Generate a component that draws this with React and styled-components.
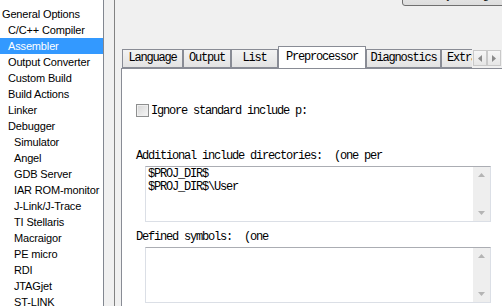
import React from 'react';
import styled, { createGlobalStyle } from 'styled-components';

const GlobalStyle = createGlobalStyle`
  html, body {
    margin: 0;
    padding: 0;
    background: #f0f0f0;
  }
`;

const Page = styled.div`
  display: flex;
  width: 502px;
  height: 306px;
  overflow: hidden;
  background: #f0f0f0;
`;

const TreePanel = styled.div`
  box-sizing: border-box;
  width: 104px;
  flex: none;
  background: #fff;
  border-right: 1px solid #828790;
  padding-top: 6px;
  font-family: "Liberation Sans", Arial, sans-serif;
  font-size: 11px;
  letter-spacing: -0.15px;
`;

const TreeRow = styled.div`
  height: 16px;
  line-height: 16px;
  padding-left: ${(p) => 2 + p.$level * 6}px;
  white-space: nowrap;
  color: ${(p) => (p.$selected ? '#fff' : '#000')};
  background: ${(p) => (p.$selected ? '#3399ff' : 'transparent')};
`;

const Splitter = styled.div`
  box-sizing: border-box;
  width: 11px;
  flex: none;
  border-right: 1px solid #828282;
`;

const Main = styled.div`
  flex: 1;
  min-width: 0;
  display: flex;
  flex-direction: column;
  padding-left: 6px;
`;

const TopBar = styled.div`
  height: 46px;
  display: flex;
  justify-content: flex-end;
  align-items: flex-start;
`;

const FactoryButton = styled.div`
  box-sizing: border-box;
  width: 106px;
  height: 22px;
  margin-top: -16px;
  margin-right: -6px;
  border: 1px solid #707070;
  border-radius: 3px;
  background: linear-gradient(#f2f2f2, #dddddd);
  font-family: "Liberation Sans", Arial, sans-serif;
  font-size: 11px;
  line-height: 20px;
  text-align: center;
  color: #000;
`;

const TabRow = styled.div`
  display: flex;
  align-items: flex-end;
  height: 22px;
  padding-left: 1px;
  position: relative;
  z-index: 1;
`;

const TabList = styled.div`
  display: flex;
  align-items: flex-end;
  flex: 1;
  min-width: 0;
  height: 100%;
  overflow: hidden;
`;

const Tab = styled.div`
  box-sizing: border-box;
  flex: none;
  width: ${(p) => p.$width}px;
  height: ${(p) => (p.$active ? 23 : 19)}px;
  margin-bottom: ${(p) => (p.$active ? -1 : 0)}px;
  border: 1px solid #898c95;
  border-bottom: ${(p) => (p.$active ? 'none' : '1px solid #898c95')};
  background: ${(p) => (p.$active ? '#fff' : 'linear-gradient(#f3f3f3, #e3e3e3)')};
  font-family: "Liberation Mono", "Courier New", monospace;
  font-size: 12px;
  letter-spacing: -1.2px;
  line-height: ${(p) => (p.$active ? 20 : 17)}px;
  text-align: ${(p) => (p.$clip ? 'left' : 'center')};
  padding-left: ${(p) => (p.$clip ? 5 : 0)}px;
  white-space: nowrap;
  color: #000;
`;

const ArrowGroup = styled.div`
  display: flex;
  margin: 0 1px 2px 1px;
`;

const ArrowButton = styled.div`
  box-sizing: border-box;
  width: 14px;
  height: 16px;
  border: 1px solid #c9c9c9;
  background: linear-gradient(#f6f6f6, #e6e6e6);
  display: flex;
  align-items: center;
  justify-content: center;
`;

const Panel = styled.div`
  flex: 1;
  background: #fff;
  border-top: 1px solid #898c95;
  border-left: 1px solid #898c95;
  padding: 35px 0 0 14px;
  font-family: "Liberation Mono", "Courier New", monospace;
  font-size: 12px;
  letter-spacing: -1.2px;
  color: #000;
`;

const CheckRow = styled.div`
  display: flex;
  align-items: center;
  gap: 2px;
  height: 13px;
  white-space: nowrap;
`;

const CheckBox = styled.span`
  box-sizing: border-box;
  width: 13px;
  height: 13px;
  flex: none;
  border: 1px solid #8e8f8f;
  background: linear-gradient(135deg, #d6d6d6, #f7f7f7);
  box-shadow: inset 0 0 0 1px #f0f0f0;
`;

const FieldLabel = styled.div`
  margin-top: ${(p) => p.$gap}px;
  height: 12px;
  line-height: 12px;
  white-space: pre;
`;

const TextBox = styled.div`
  box-sizing: border-box;
  display: flex;
  width: 346px;
  height: 56px;
  margin: 4px 0 0 9px;
  border: 1px solid #dbdfe6;
  border-top-color: #abadb3;
  background: #fff;
`;

const TextContent = styled.div`
  flex: 1;
  padding: 1px 2px;
  line-height: 13px;
  white-space: pre;
`;

const ScrollBar = styled.div`
  width: 17px;
  flex: none;
  background: #eeeeee;
  display: flex;
  flex-direction: column;
  justify-content: space-between;
  align-items: center;
  padding: 6px 0;
  box-sizing: border-box;
`;

const Triangle = ({ dir, color = '#b4b4b4' }) => {
  const pts = {
    up: '0,4 3.5,0 7,4',
    down: '0,0 3.5,4 7,0',
    left: '4,0 0,3.5 4,7',
    right: '0,0 4,3.5 0,7',
  }[dir];
  const horiz = dir === 'left' || dir === 'right';
  return (
    <svg width={horiz ? 4 : 7} height={horiz ? 7 : 4} viewBox={horiz ? '0 0 4 7' : '0 0 7 4'}>
      <polygon points={pts} fill={color} />
    </svg>
  );
};

const treeItems = [
  { label: 'General Options', level: 0 },
  { label: 'C/C++ Compiler', level: 1 },
  { label: 'Assembler', level: 1, selected: true },
  { label: 'Output Converter', level: 1 },
  { label: 'Custom Build', level: 1 },
  { label: 'Build Actions', level: 1 },
  { label: 'Linker', level: 1 },
  { label: 'Debugger', level: 1 },
  { label: 'Simulator', level: 2 },
  { label: 'Angel', level: 2 },
  { label: 'GDB Server', level: 2 },
  { label: 'IAR ROM-monitor', level: 2 },
  { label: 'J-Link/J-Trace', level: 2 },
  { label: 'TI Stellaris', level: 2 },
  { label: 'Macraigor', level: 2 },
  { label: 'PE micro', level: 2 },
  { label: 'RDI', level: 2 },
  { label: 'JTAGjet', level: 2 },
  { label: 'ST-LINK', level: 2 },
];

const tabs = [
  { label: 'Language', width: 61 },
  { label: 'Output', width: 48 },
  { label: 'List', width: 47 },
  { label: 'Preprocessor', width: 88, active: true },
  { label: 'Diagnostics', width: 75 },
  { label: 'Extra Options', width: 80, clip: true },
];

const ScrolledBox = ({ children }) => (
  <TextBox>
    <TextContent>{children}</TextContent>
    <ScrollBar>
      <Triangle dir="up" />
      <Triangle dir="down" />
    </ScrollBar>
  </TextBox>
);

const App = () => {
  return (
    <>
      <GlobalStyle />
      <Page>
        <TreePanel>
          {treeItems.map((item) => (
            <TreeRow key={item.label} $level={item.level} $selected={item.selected}>
              {item.label}
            </TreeRow>
          ))}
        </TreePanel>
        <Splitter />
        <Main>
          <TopBar>
            <FactoryButton>Factory Settings</FactoryButton>
          </TopBar>
          <TabRow>
            <TabList>
              {tabs.map((t) => (
                <Tab key={t.label} $width={t.width} $active={t.active} $clip={t.clip}>
                  {t.label}
                </Tab>
              ))}
            </TabList>
            <ArrowGroup>
              <ArrowButton>
                <Triangle dir="left" color="#8a8a8a" />
              </ArrowButton>
              <ArrowButton>
                <Triangle dir="right" color="#8a8a8a" />
              </ArrowButton>
            </ArrowGroup>
          </TabRow>
          <Panel>
            <CheckRow>
              <CheckBox />
              <span>Ignore standard include p:</span>
            </CheckRow>
            <FieldLabel $gap={33}>Additional include directories:  (one per</FieldLabel>
            <ScrolledBox>{'$PROJ_DIR$\n$PROJ_DIR$\\User'}</ScrolledBox>
            <FieldLabel $gap={9}>Defined symbols:  (one</FieldLabel>
            <ScrolledBox />
          </Panel>
        </Main>
      </Page>
    </>
  );
};

export default App;
